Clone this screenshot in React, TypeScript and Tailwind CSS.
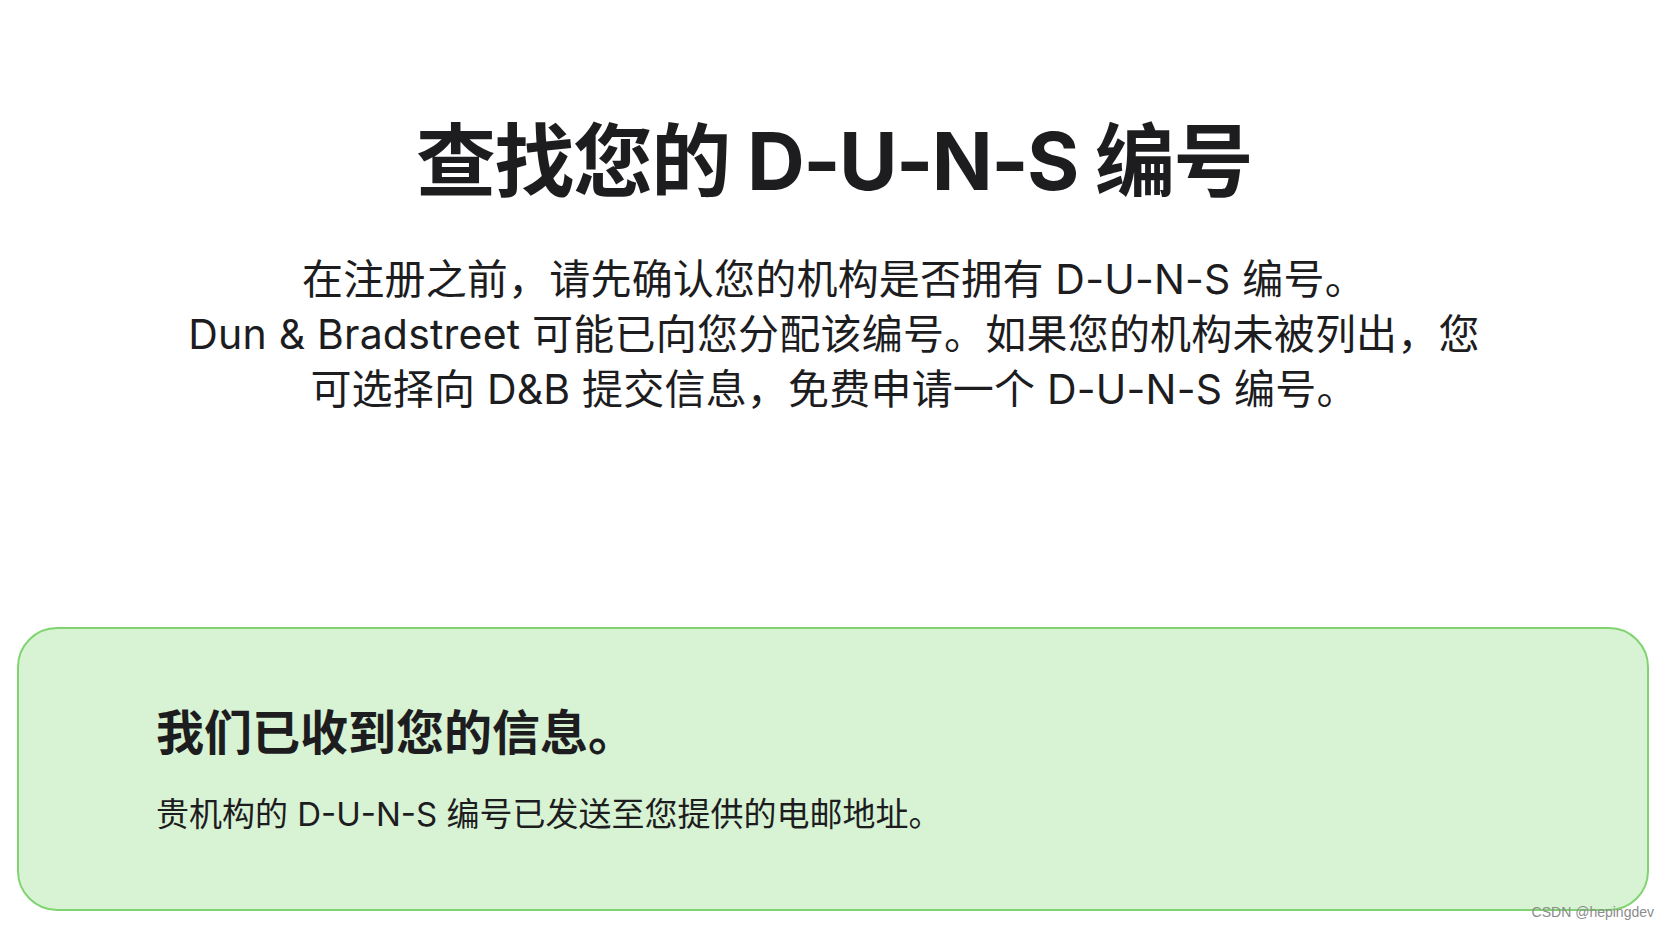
export default function App() {
  return (
    <div className="relative min-h-[930px] overflow-hidden bg-white font-[Inter,'Noto_Sans_CJK_SC',sans-serif] text-[#1d1d1f]">
      <section className="pt-[117px] text-center">
        <h1 className="text-[80px] font-bold leading-[88px] tracking-[-1.6px]">查找您的 D-U-N-S 编号</h1>
        <p className="mt-[47px] text-[41px] leading-[55px] tracking-[0.2px]">
          <span className="block whitespace-nowrap">在注册之前，请先确认您的机构是否拥有 D-U-N-S 编号。</span>
          <span className="block whitespace-nowrap">Dun &amp; Bradstreet 可能已向您分配该编号。如果您的机构未被列出，您</span>
          <span className="block whitespace-nowrap">可选择向 D&amp;B 提交信息，免费申请一个 D-U-N-S 编号。</span>
        </p>
      </section>

      <div className="ml-[17px] mr-[19px] mt-[210px] rounded-[40px] border-2 border-[#80d470] bg-[#d8f2d4] pb-[71px] pl-[137px] pt-[75px]">
        <h2 className="text-[48px] font-bold leading-[58px]">我们已收到您的信息。</h2>
        <p className="mt-[28px] text-[33px] leading-[48px]">贵机构的 D-U-N-S 编号已发送至您提供的电邮地址。</p>
      </div>

      <span className="absolute bottom-[7px] right-[14px] font-['Liberation_Sans',sans-serif] text-[14px] text-[#8c8c8c]">
        CSDN @hepingdev
      </span>
    </div>
  );
}
